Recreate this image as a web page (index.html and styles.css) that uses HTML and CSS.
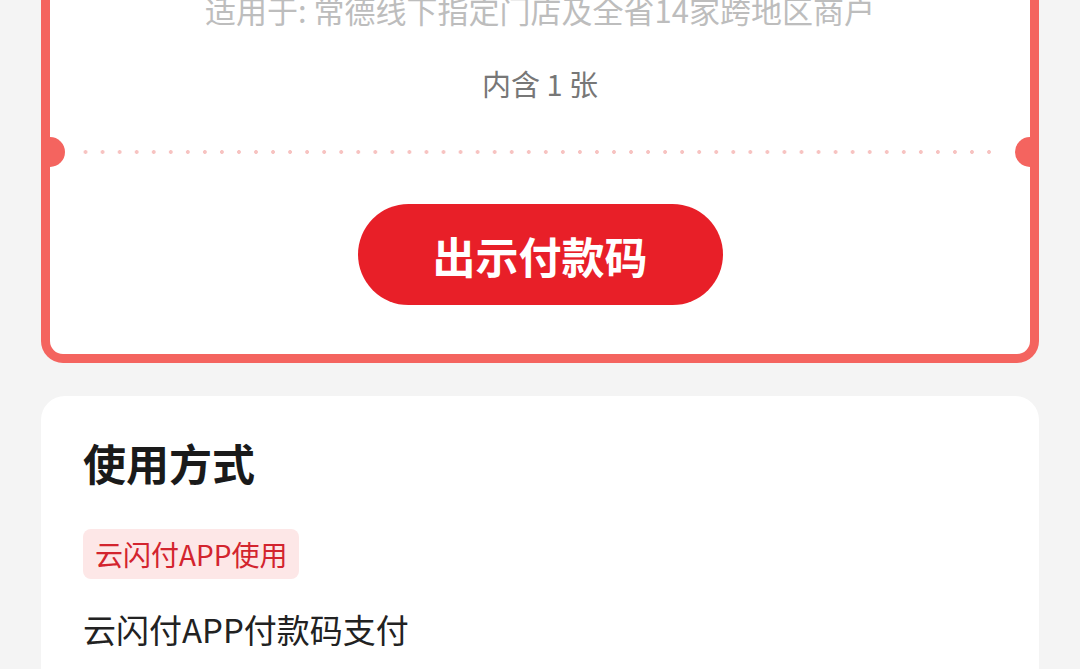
FILE: index.html
```html
<!DOCTYPE html>
<html lang="zh-CN">
<head>
    <meta charset="UTF-8">
    <meta name="viewport" content="width=device-width, initial-scale=1.0">
    <title>券详情</title>
    <link rel="stylesheet" href="styles.css">
</head>
<body>
    <main class="page">
        <section class="coupon">
            <div class="coupon-top">
                <p class="scope">适用于: 常德线下指定门店及全省14家跨地区商户</p>
                <p class="count">内含 1 张</p>
            </div>
            <div class="divider">
                <span class="notch notch-left"></span>
                <span class="dots"></span>
                <span class="notch notch-right"></span>
            </div>
            <div class="coupon-bottom">
                <button class="pay-btn">出示付款码</button>
            </div>
        </section>

        <section class="usage">
            <h2 class="usage-title">使用方式</h2>
            <span class="tag">云闪付APP使用</span>
            <p class="usage-text">云闪付APP付款码支付</p>
        </section>
    </main>
</body>
</html>
```

FILE: styles.css
```css
*{
    margin: 0;
    padding: 0;
    box-sizing: border-box;
}
body{
    background-color: #f4f4f4;
    font-family: "Noto Sans CJK SC", "Noto Sans", sans-serif;
    overflow: hidden;
}
.page{
    padding: 0 41px;
}
.coupon{
    margin-top: -30px;
    background-color: #fff;
    border: 9px solid #f4645f;
    border-radius: 0 0 22px 22px;
    overflow: hidden;
}
.coupon-top{
    padding-top: 11px;
    text-align: center;
}
.scope{
    font-size: 31px;
    line-height: 40px;
    color: #bdbdbd;
}
.count{
    margin-top: 33px;
    font-size: 29px;
    line-height: 40px;
    color: #777;
}
.divider{
    position: relative;
    height: 30px;
    margin-top: 34px;
    display: flex;
    align-items: center;
}
.dots{
    flex: 1;
    height: 4px;
    margin: 0 32px 0 27px;
    background-image: radial-gradient(circle, #f7c3c1 1.6px, transparent 2.2px);
    background-size: 17.06px 4px;
    background-repeat: repeat-x;
}
.notch{
    position: absolute;
    top: 0;
    width: 30px;
    height: 30px;
    border-radius: 50%;
    background-color: #f4645f;
}
.notch-left{
    left: -15px;
}
.notch-right{
    right: -15px;
}
.coupon-bottom{
    display: flex;
    justify-content: center;
    padding: 37px 0 49px;
}
.pay-btn{
    width: 365px;
    height: 101px;
    border: none;
    border-radius: 51px;
    background-color: #e81f28;
    color: #fff;
    font-family: inherit;
    font-size: 43px;
    font-weight: 700;
}
.usage{
    margin-top: 33px;
    background-color: #fff;
    border-radius: 24px;
    padding: 38px 42px 40px;
    min-height: 320px;
}
.usage-title{
    font-size: 43px;
    line-height: 56px;
    font-weight: 700;
    color: #1a1a1a;
}
.tag{
    display: inline-block;
    margin-top: 39px;
    padding: 0 12px;
    height: 50px;
    line-height: 50px;
    border-radius: 8px;
    background-color: #fde7e7;
    color: #d3242e;
    font-size: 28px;
}
.usage-text{
    margin-top: 28px;
    font-size: 33px;
    line-height: 44px;
    color: #222;
}
```
